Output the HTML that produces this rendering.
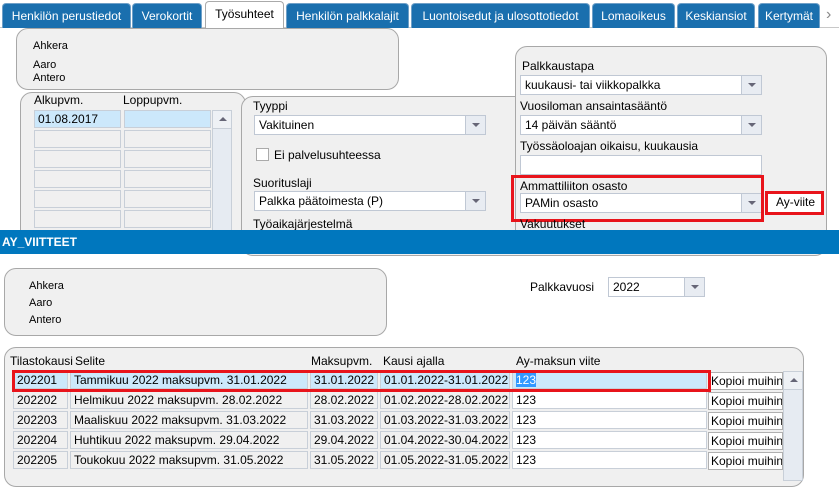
<!DOCTYPE html>
<html><head><meta charset="utf-8"><style>
*{box-sizing:border-box;margin:0;padding:0}
body{width:839px;height:472px;overflow:hidden;background:#fff;font-family:"Liberation Sans",Arial,sans-serif;font-size:12px;color:#000;position:relative}
.a{position:absolute;white-space:nowrap}
.tab{position:absolute;top:3px;height:25px;background:#1a6fae;color:#fff;font-size:12px;line-height:24px;text-align:center;border-radius:4px 4px 0 0;border:1px solid #6fa0c8;border-bottom:none;white-space:nowrap}
.tab.sel{background:#fff;color:#000;border-color:#aaa}
.pan{position:absolute;background:#f0f0f0;border:1px solid #a8a8a8;border-radius:12px}
.cell{position:absolute;height:18px;background:#f0f0f0;border:1px solid #c8cfd8;font-size:12px;line-height:16px;padding-left:3px;white-space:nowrap;overflow:hidden}
.sel2{background:#cce8fb}
.inp{position:absolute;height:20px;background:#fff;border:1px solid #c0c8d4;line-height:18px;padding-left:4px;font-size:12px;white-space:nowrap}
.dd{position:absolute;top:0;right:0;width:20px;height:100%;background:#e8ecf2;border-left:1px solid #c0c8d4}
.dd:after{content:"";position:absolute;left:6px;top:7px;border-left:4px solid transparent;border-right:4px solid transparent;border-top:4px solid #667}
.red{position:absolute;border:3px solid #e8141b}
.sb{position:absolute;background:#e6ebf2;border:1px solid #c8cfd8}
.up{position:absolute;left:0;top:0;width:100%;height:18px;background:#eef1f5;border-bottom:1px solid #c8cfd8}
.up:after{content:"";position:absolute;left:6px;top:6px;border-left:4px solid transparent;border-right:4px solid transparent;border-bottom:4px solid #667}
.btn{position:absolute;background:#fff;border:1px solid #b0b0b0;font-size:12px;line-height:16px;padding-left:2px;white-space:nowrap;overflow:hidden}
</style></head><body>
<div class="a" style="left:0;top:27px;width:839px;height:1px;background:#c8c8c8"></div>
<div class="tab" style="left:2px;width:129px">Henkilön perustiedot</div>
<div class="tab" style="left:132px;width:70px">Verokortit</div>
<div class="tab sel" style="left:205px;width:79px;top:1px;height:27px">Työsuhteet</div>
<div class="tab" style="left:286px;width:123px">Henkilön palkkalajit</div>
<div class="tab" style="left:411px;width:179px">Luontoisedut ja ulosottotiedot</div>
<div class="tab" style="left:592px;width:83px">Lomaoikeus</div>
<div class="tab" style="left:677px;width:78px">Keskiansiot</div>
<div class="tab" style="left:758px;width:62px">Kertymät</div>
<div class="a" style="left:826px;top:6px;color:#888;font-size:16px">›</div>

<div class="pan" style="left:16px;top:28px;width:383px;height:62px"></div>
<div class="a" style="left:33px;top:40px;font-size:11px">Ahkera</div>
<div class="a" style="left:33px;top:59px;font-size:11px">Aaro</div>
<div class="a" style="left:33px;top:72px;font-size:11px">Antero</div>

<div class="pan" style="left:20px;top:92px;width:226px;height:160px"></div>
<div class="a" style="left:34px;top:93px">Alkupvm.</div>
<div class="a" style="left:123px;top:93px">Loppupvm.</div>
<div class="cell sel2" style="left:34px;top:110px;width:87px">01.08.2017</div>
<div class="cell sel2" style="left:124px;top:110px;width:87px"></div>
<div class="cell" style="left:34px;top:130px;width:87px"></div><div class="cell" style="left:124px;top:130px;width:87px"></div>
<div class="cell" style="left:34px;top:150px;width:87px"></div><div class="cell" style="left:124px;top:150px;width:87px"></div>
<div class="cell" style="left:34px;top:170px;width:87px"></div><div class="cell" style="left:124px;top:170px;width:87px"></div>
<div class="cell" style="left:34px;top:190px;width:87px"></div><div class="cell" style="left:124px;top:190px;width:87px"></div>
<div class="cell" style="left:34px;top:210px;width:87px"></div><div class="cell" style="left:124px;top:210px;width:87px"></div>
<div class="sb" style="left:212px;top:110px;width:20px;height:130px"><div class="up"></div></div>

<div class="pan" style="left:241px;top:96px;width:586px;height:160px"></div>
<div class="pan" style="left:515px;top:46px;width:312px;height:200px"></div>
<div class="a" style="left:253px;top:99px">Tyyppi</div>
<div class="inp" style="left:254px;top:115px;width:232px">Vakituinen<div class="dd"></div></div>
<div class="a" style="left:256px;top:148px;width:13px;height:13px;background:#fff;border:1px solid #aaa"></div>
<div class="a" style="left:274px;top:148px">Ei palvelusuhteessa</div>
<div class="a" style="left:253px;top:176px">Suorituslaji</div>
<div class="inp" style="left:254px;top:191px;width:232px">Palkka päätoimesta (P)<div class="dd"></div></div>
<div class="a" style="left:253px;top:217px">Työaikajärjestelmä</div>

<div class="a" style="left:522px;top:59px">Palkkaustapa</div>
<div class="inp" style="left:520px;top:75px;width:242px">kuukausi- tai viikkopalkka<div class="dd"></div></div>
<div class="a" style="left:520px;top:99px">Vuosiloman ansaintasääntö</div>
<div class="inp" style="left:520px;top:115px;width:242px">14 päivän sääntö<div class="dd"></div></div>
<div class="a" style="left:520px;top:139px">Työssäoloajan oikaisu, kuukausia</div>
<div class="inp" style="left:520px;top:155px;width:242px"></div>
<div class="a" style="left:520px;top:179px">Ammattiliiton osasto</div>
<div class="inp" style="left:520px;top:193px;width:242px">PAMin osasto<div class="dd"></div></div>
<div class="red" style="left:511px;top:175px;width:253px;height:47px"></div>
<div class="btn" style="left:768px;top:194px;width:53px;height:18px;border:none;text-align:center">Ay-viite</div>
<div class="red" style="left:765px;top:191px;width:59px;height:24px"></div>
<div class="a" style="left:520px;top:217px">Vakuutukset</div>

<div class="a" style="left:0;top:230px;width:839px;height:24px;background:#0077be"></div>
<div class="a" style="left:2px;top:235px;color:#fff;font-weight:bold;font-size:12px">AY_VIITTEET</div>

<div class="pan" style="left:4px;top:268px;width:383px;height:68px"></div>
<div class="a" style="left:29px;top:280px;font-size:11px">Ahkera</div>
<div class="a" style="left:29px;top:297px;font-size:11px">Aaro</div>
<div class="a" style="left:29px;top:314px;font-size:11px">Antero</div>
<div class="a" style="left:530px;top:280px">Palkkavuosi</div>
<div class="inp" style="left:608px;top:277px;width:97px">2022<div class="dd"></div></div>

<div class="pan" style="left:4px;top:347px;width:800px;height:140px"></div>
<div class="a" style="left:10px;top:354px">Tilastokausi</div>
<div class="a" style="left:75px;top:354px">Selite</div>
<div class="a" style="left:311px;top:354px">Maksupvm.</div>
<div class="a" style="left:383px;top:354px">Kausi ajalla</div>
<div class="a" style="left:516px;top:354px">Ay-maksun viite</div>

<div class="cell sel2" style="left:13px;top:371px;width:55px">202201</div>
<div class="cell sel2" style="left:70px;top:371px;width:238px">Tammikuu 2022 maksupvm. 31.01.2022</div>
<div class="cell sel2" style="left:310px;top:371px;width:68px">31.01.2022</div>
<div class="cell sel2" style="left:380px;top:371px;width:130px">01.01.2022-31.01.2022</div>
<div class="cell sel2" style="left:512px;top:371px;width:195px"><span style="background:#3399ff;color:#fff">123</span></div>
<div class="btn" style="left:708px;top:372px;width:75px;height:18px">Kopioi muihin</div>

<div class="cell" style="left:13px;top:391px;width:55px">202202</div>
<div class="cell" style="left:70px;top:391px;width:238px">Helmikuu 2022 maksupvm. 28.02.2022</div>
<div class="cell" style="left:310px;top:391px;width:68px">28.02.2022</div>
<div class="cell" style="left:380px;top:391px;width:130px">01.02.2022-28.02.2022</div>
<div class="cell" style="left:512px;top:391px;width:195px;background:#fff">123</div>
<div class="btn" style="left:708px;top:392px;width:75px;height:18px">Kopioi muihin</div>

<div class="cell" style="left:13px;top:411px;width:55px">202203</div>
<div class="cell" style="left:70px;top:411px;width:238px">Maaliskuu 2022 maksupvm. 31.03.2022</div>
<div class="cell" style="left:310px;top:411px;width:68px">31.03.2022</div>
<div class="cell" style="left:380px;top:411px;width:130px">01.03.2022-31.03.2022</div>
<div class="cell" style="left:512px;top:411px;width:195px;background:#fff">123</div>
<div class="btn" style="left:708px;top:412px;width:75px;height:18px">Kopioi muihin</div>

<div class="cell" style="left:13px;top:431px;width:55px">202204</div>
<div class="cell" style="left:70px;top:431px;width:238px">Huhtikuu 2022 maksupvm. 29.04.2022</div>
<div class="cell" style="left:310px;top:431px;width:68px">29.04.2022</div>
<div class="cell" style="left:380px;top:431px;width:130px">01.04.2022-30.04.2022</div>
<div class="cell" style="left:512px;top:431px;width:195px;background:#fff">123</div>
<div class="btn" style="left:708px;top:432px;width:75px;height:18px">Kopioi muihin</div>

<div class="cell" style="left:13px;top:451px;width:55px">202205</div>
<div class="cell" style="left:70px;top:451px;width:238px">Toukokuu 2022 maksupvm. 31.05.2022</div>
<div class="cell" style="left:310px;top:451px;width:68px">31.05.2022</div>
<div class="cell" style="left:380px;top:451px;width:130px">01.05.2022-31.05.2022</div>
<div class="cell" style="left:512px;top:451px;width:195px;background:#fff">123</div>
<div class="btn" style="left:708px;top:452px;width:75px;height:18px">Kopioi muihin</div>

<div class="sb" style="left:783px;top:371px;width:20px;height:110px"><div class="up"></div></div>
<div class="red" style="left:12px;top:370px;width:699px;height:22px"></div>
</body></html>
